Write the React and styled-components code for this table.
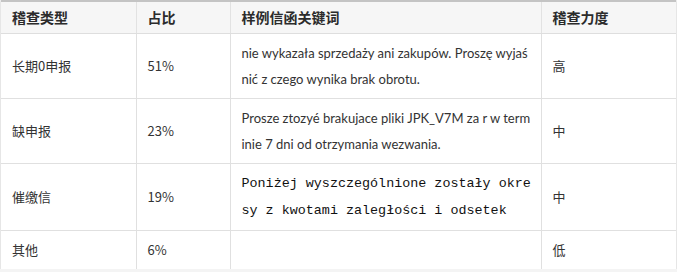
import React from "react";
import styled, { createGlobalStyle } from "styled-components";

const Global = createGlobalStyle`
  html, body { margin: 0; padding: 0; background: #f4f4f4; }
  body { font-family: "Noto Sans", "Noto Sans CJK SC", sans-serif; color: #333; }
`;

const Card = styled.div`
  margin: 0 1px;
  width: 675px;
  background: #fff;
  border-top: 2px solid #c4c4c4;
  box-shadow: 0 1px 2px rgba(0, 0, 0, 0.12), 0 0 1px rgba(0, 0, 0, 0.1);
`;

const Table = styled.table`
  border-collapse: collapse;
  table-layout: fixed;
  width: 100%;
  font-size: 13px;
`;

const Col = styled.col`
  width: ${(p) => p.$w}px;
`;

const Th = styled.th`
  text-align: left;
  font-family: "Noto Sans CJK SC", sans-serif;
  font-weight: 700;
  font-size: 14px;
  line-height: 21px;
  padding: 5px 10px 5px 11px;
  background: #f6f6f6;
  color: #2b2b2b;
  border-bottom: 1px solid #dedede;
  border-left: 1px solid #e2e2e2;
  &:first-child { border-left: none; }
`;

const Td = styled.td`
  padding: 6px 10px 6px 11px;
  line-height: 26px;
  vertical-align: middle;
  border-top: 1px solid #e0e0e0;
  border-left: 1px solid #e0e0e0;
  font-family: "Noto Sans CJK SC", sans-serif;
  color: #333;
  &:first-child { border-left: none; }
`;

const Line = styled.span`
  display: block;
  white-space: nowrap;
  font-family: ${(p) =>
    p.$mono ? '"Liberation Mono", monospace' : '"Lato", "Noto Sans", sans-serif'};
  font-size: ${(p) => (p.$mono ? "13.4px" : "13px")};
  line-height: ${(p) => (p.$mono ? "27px" : "26px")};
  color: ${(p) => (p.$mono ? "#111" : "#333")};
`;

const rows = [
  {
    type: "长期0申报",
    pct: "51%",
    lines: ["nie wykazała sprzedaży ani zakupów. Proszę wyjaś", "nić z czego wynika brak obrotu."],
    level: "高",
  },
  {
    type: "缺申报",
    pct: "23%",
    lines: ["Prosze ztozyé brakujace pliki JPK_V7M za r w term", "inie 7 dni od otrzymania wezwania."],
    level: "中",
  },
  {
    type: "催缴信",
    pct: "19%",
    mono: true,
    lines: ["Poniżej wyszczególnione zostały okre", "sy z kwotami zaległości i odsetek"],
    level: "中",
  },
  { type: "其他", pct: "6%", lines: [], level: "低" },
];

export default function App() {
  return (
    <>
      <Global />
      <Card>
        <Table>
          <colgroup>
            <Col $w={135} />
            <Col $w={94} />
            <Col $w={311} />
            <Col $w={135} />
          </colgroup>
          <thead>
            <tr>
              <Th>稽查类型</Th>
              <Th>占比</Th>
              <Th>样例信函关键词</Th>
              <Th>稽查力度</Th>
            </tr>
          </thead>
          <tbody>
            {rows.map((r) => (
              <tr key={r.type}>
                <Td>{r.type}</Td>
                <Td>{r.pct}</Td>
                <Td>
                  {r.lines.map((l) => (
                    <Line key={l} $mono={r.mono}>{l}</Line>
                  ))}
                </Td>
                <Td>{r.level}</Td>
              </tr>
            ))}
          </tbody>
        </Table>
      </Card>
    </>
  );
}
